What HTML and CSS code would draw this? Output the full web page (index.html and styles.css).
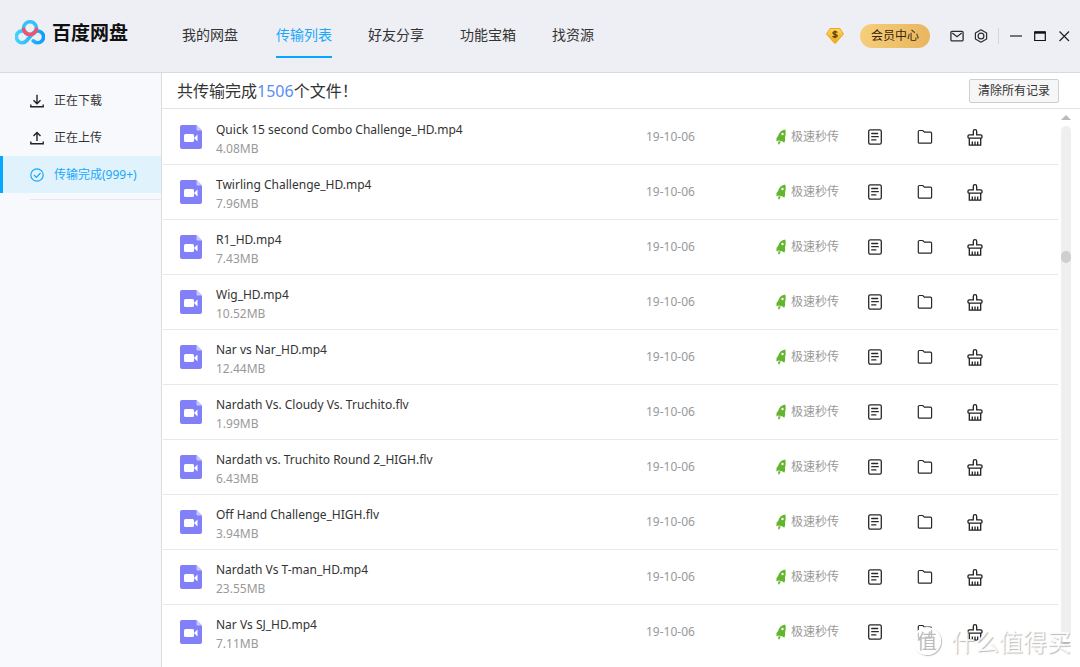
FILE: index.html
```html
<!DOCTYPE html>
<html lang="zh-CN">
<head>
<meta charset="utf-8">
<title>百度网盘</title>
<link rel="stylesheet" href="styles.css">
</head>
<body>
<svg class="sprite" aria-hidden="true">
  <defs>
    <linearGradient id="logo-blue" x1="0" x2="1" y1="0" y2="0"><stop offset="0" stop-color="#42d4fb"/><stop offset="1" stop-color="#0a9dfd"/></linearGradient>
    <linearGradient id="gem-gold" x1="0" x2="0" y1="0" y2="1"><stop offset="0" stop-color="#ffd660"/><stop offset="1" stop-color="#eca91a"/></linearGradient>
  </defs>
  <symbol id="video" viewBox="0 0 22 24">
    <path d="M2 0h14.500L22 5.500V22a2 2 0 0 1-2 2H2a2 2 0 0 1-2-2V2a2 2 0 0 1 2-2z" fill="#8180f8"/>
    <path d="M16.500 0L22 5.500h-4.500a1 1 0 0 1-1-1z" fill="#c9c8fc"/>
    <rect x="4" y="9" width="10" height="8" rx="1.500" fill="#fff"/>
    <path d="M14.500 12.500L17.500 9.500v7l-3-3z" fill="#fff"/>
  </symbol>
  <symbol id="rocket" viewBox="0 0 10 16">
    <path d="M9.300.5C5.500 1 3 3.500 2.200 6.800L.5 9v3.500l2-1 3.600.7 2.200 1.500.9-2.800-.2-2.400C9.800 6 9.900 3 9.300.5z" fill="#63b52e"/>
    <circle cx="6.500" cy="5" r="1.200" fill="#fff"/>
    <path d="M2.500 12.200l2.300.4-1.700 3.100-1-1z" fill="#63b52e"/>
  </symbol>
  <symbol id="doc" viewBox="0 0 16 16">
    <g fill="none" stroke="#292929" stroke-width="1.300" stroke-linecap="round"><rect x="1.700" y=".8" width="12.600" height="14.400" rx="1.600"/><path d="M4.700 4.500h6M4.700 7.700h6.600M4.700 10.900h4.200"/></g>
  </symbol>
  <symbol id="folder" viewBox="0 0 16 16">
    <path d="M1.300 13V2.700a1.200 1.200 0 0 1 1.200-1.200h3.300l1.600 1.700h6a1.200 1.200 0 0 1 1.200 1.200V13a1.100 1.100 0 0 1-1.100 1.100H2.400A1.100 1.100 0 0 1 1.300 13z" fill="none" stroke="#292929" stroke-width="1.200"/>
  </symbol>
  <symbol id="brush" viewBox="0 0 16 17">
    <path d="M6.300 5.800V2.400a1.700 1.700 0 0 1 3.400 0v3.400h4a1.300 1.300 0 0 1 1.300 1.300v1.200a.8.800 0 0 1-.8.800H1.800a.8.800 0 0 1-.8-.8V7.100a1.300 1.300 0 0 1 1.300-1.300zM2.300 9.100v7h11.400v-7M5.300 15.600v-3M8 15.600v-3M10.700 15.600v-3" fill="none" stroke="#202020" stroke-width="1.300"/>
  </symbol>
</svg>
<div class="app">
  <header class="topbar">
    <div class="brand">
      <svg class="brand-mark" viewBox="0 0 30 25" aria-hidden="true">
        <g fill="none" stroke-width="3.600" stroke-linecap="round">
          <circle cx="15" cy="8.300" r="6.500" stroke="#2fc2fc"/>
          <path d="M18.200 20.800a5.900 5.900 0 1 0-.4-7.300L11.800 20.500a5.900 5.900 0 1 1 .3-7" stroke="url(#logo-blue)"/>
          <path d="M8.600 9a6.500 6.500 0 0 0 12.800 0" stroke="#fa4f68"/>
        </g>
      </svg>
      <span class="brand-name">百度网盘</span>
    </div>
    <nav class="tabs">
      <a class="tab" href="#">我的网盘</a>
      <a class="tab active" href="#">传输列表</a>
      <a class="tab" href="#">好友分享</a>
      <a class="tab" href="#">功能宝箱</a>
      <a class="tab" href="#">找资源</a>
    </nav>
    <div class="tools">
      <svg class="gem" viewBox="0 0 18 16" aria-hidden="true"><path d="M4 .5h10L17.500 6 10 14.700q-1 1-2 0L.5 6z" fill="url(#gem-gold)" stroke="#eba91c"/><path d="M11.300 4.500C10.800 3.400 7 3 6.900 4.900c0 1.800 4.400 1 4.400 2.900C11.200 9.600 7.200 9.400 6.700 8M9 2.600v7.600" fill="none" stroke="#5b3a08" stroke-width="1.200"/></svg>
      <button class="vip">会员中心</button>
      <button class="icon-btn" aria-label="消息"><svg class="i14" viewBox="0 0 14 14"><g fill="none" stroke="#2b2b2f" stroke-width="1.300"><rect x=".9" y="2.300" width="12.200" height="9.600" rx="1.200"/><path d="M2.300 4l4.700 3.700L11.700 4"/></g></svg></button>
      <button class="icon-btn" aria-label="设置"><svg class="i14" viewBox="0 0 14 14"><g fill="none" stroke="#2b2b2f" stroke-width="1.200"><path d="M7 .8l5.600 3.100v6.200L7 13.200l-5.600-3.100V3.900z" stroke-linejoin="round"/><circle cx="7" cy="7" r="2.900"/></g></svg></button>
      <span class="divider"></span>
      <button class="icon-btn" aria-label="最小化"><svg class="i14" viewBox="0 0 14 14"><path d="M1 7h12" stroke="#222" stroke-width="1.200"/></svg></button>
      <button class="icon-btn" aria-label="最大化"><svg class="i14" viewBox="0 0 14 14"><path d="M1.700 3h10.600v8.500H1.700z" fill="none" stroke="#111" stroke-width="1.200"/><path d="M1.500 3.500h11" stroke="#111" stroke-width="2.400"/></svg></button>
      <button class="icon-btn" aria-label="关闭"><svg class="i14" viewBox="0 0 14 14"><path d="M2.500 2.500l9.500 9.500M12 2.500L2.500 12" stroke="#222" stroke-width="1.200"/></svg></button>
    </div>
  </header>
  <div class="body">
    <aside class="sidebar">
      <a class="side-item" href="#"><svg class="i14" viewBox="0 0 14 14"><path d="M7 .8v8.700M3.500 6.200L7 9.700l3.500-3.500M.8 10.500v2.300h12.400v-2.300" fill="none" stroke="#222" stroke-width="1.400"/></svg>正在下载</a>
      <a class="side-item" href="#"><svg class="i14" viewBox="0 0 14 14"><path d="M7 10V1.500M3.500 5L7 1.500 10.500 5M.8 10.500v2.300h12.400v-2.300" fill="none" stroke="#222" stroke-width="1.400"/></svg>正在上传</a>
      <a class="side-item current" href="#"><svg class="i14" viewBox="0 0 14 14"><g fill="none" stroke="#1aa8fb" stroke-width="1.200"><circle cx="7" cy="7" r="6.200"/><path d="M4 7l2.400 2.400L10.500 5"/></g></svg>传输完成(999+)</a>
      <div class="side-rule"></div>
    </aside>
    <main class="main">
      <div class="summary">
        <h1 class="summary-text">共传输完成<span class="count">1506</span>个文件！</h1>
        <button class="clear">清除所有记录</button>
      </div>
      <div class="list-area">
        <ul class="list">
          <li class="row"><svg class="file-icon"><use href="#video"/></svg><div class="file"><div class="name">Quick 15 second Combo Challenge_HD.mp4</div><div class="size">4.08MB</div></div><span class="date">19-10-06</span><span class="speed"><svg class="rocket"><use href="#rocket"/></svg>极速秒传</span><div class="actions"><button class="icon-btn" aria-label="打开文件"><svg class="i16"><use href="#doc"/></svg></button><button class="icon-btn" aria-label="打开文件夹"><svg class="i16"><use href="#folder"/></svg></button><button class="icon-btn" aria-label="清除记录"><svg class="i-brush"><use href="#brush"/></svg></button></div></li>
          <li class="row"><svg class="file-icon"><use href="#video"/></svg><div class="file"><div class="name">Twirling Challenge_HD.mp4</div><div class="size">7.96MB</div></div><span class="date">19-10-06</span><span class="speed"><svg class="rocket"><use href="#rocket"/></svg>极速秒传</span><div class="actions"><button class="icon-btn" aria-label="打开文件"><svg class="i16"><use href="#doc"/></svg></button><button class="icon-btn" aria-label="打开文件夹"><svg class="i16"><use href="#folder"/></svg></button><button class="icon-btn" aria-label="清除记录"><svg class="i-brush"><use href="#brush"/></svg></button></div></li>
          <li class="row"><svg class="file-icon"><use href="#video"/></svg><div class="file"><div class="name">R1_HD.mp4</div><div class="size">7.43MB</div></div><span class="date">19-10-06</span><span class="speed"><svg class="rocket"><use href="#rocket"/></svg>极速秒传</span><div class="actions"><button class="icon-btn" aria-label="打开文件"><svg class="i16"><use href="#doc"/></svg></button><button class="icon-btn" aria-label="打开文件夹"><svg class="i16"><use href="#folder"/></svg></button><button class="icon-btn" aria-label="清除记录"><svg class="i-brush"><use href="#brush"/></svg></button></div></li>
          <li class="row"><svg class="file-icon"><use href="#video"/></svg><div class="file"><div class="name">Wig_HD.mp4</div><div class="size">10.52MB</div></div><span class="date">19-10-06</span><span class="speed"><svg class="rocket"><use href="#rocket"/></svg>极速秒传</span><div class="actions"><button class="icon-btn" aria-label="打开文件"><svg class="i16"><use href="#doc"/></svg></button><button class="icon-btn" aria-label="打开文件夹"><svg class="i16"><use href="#folder"/></svg></button><button class="icon-btn" aria-label="清除记录"><svg class="i-brush"><use href="#brush"/></svg></button></div></li>
          <li class="row"><svg class="file-icon"><use href="#video"/></svg><div class="file"><div class="name">Nar vs Nar_HD.mp4</div><div class="size">12.44MB</div></div><span class="date">19-10-06</span><span class="speed"><svg class="rocket"><use href="#rocket"/></svg>极速秒传</span><div class="actions"><button class="icon-btn" aria-label="打开文件"><svg class="i16"><use href="#doc"/></svg></button><button class="icon-btn" aria-label="打开文件夹"><svg class="i16"><use href="#folder"/></svg></button><button class="icon-btn" aria-label="清除记录"><svg class="i-brush"><use href="#brush"/></svg></button></div></li>
          <li class="row"><svg class="file-icon"><use href="#video"/></svg><div class="file"><div class="name">Nardath Vs. Cloudy Vs. Truchito.flv</div><div class="size">1.99MB</div></div><span class="date">19-10-06</span><span class="speed"><svg class="rocket"><use href="#rocket"/></svg>极速秒传</span><div class="actions"><button class="icon-btn" aria-label="打开文件"><svg class="i16"><use href="#doc"/></svg></button><button class="icon-btn" aria-label="打开文件夹"><svg class="i16"><use href="#folder"/></svg></button><button class="icon-btn" aria-label="清除记录"><svg class="i-brush"><use href="#brush"/></svg></button></div></li>
          <li class="row"><svg class="file-icon"><use href="#video"/></svg><div class="file"><div class="name">Nardath vs. Truchito Round 2_HIGH.flv</div><div class="size">6.43MB</div></div><span class="date">19-10-06</span><span class="speed"><svg class="rocket"><use href="#rocket"/></svg>极速秒传</span><div class="actions"><button class="icon-btn" aria-label="打开文件"><svg class="i16"><use href="#doc"/></svg></button><button class="icon-btn" aria-label="打开文件夹"><svg class="i16"><use href="#folder"/></svg></button><button class="icon-btn" aria-label="清除记录"><svg class="i-brush"><use href="#brush"/></svg></button></div></li>
          <li class="row"><svg class="file-icon"><use href="#video"/></svg><div class="file"><div class="name">Off Hand Challenge_HIGH.flv</div><div class="size">3.94MB</div></div><span class="date">19-10-06</span><span class="speed"><svg class="rocket"><use href="#rocket"/></svg>极速秒传</span><div class="actions"><button class="icon-btn" aria-label="打开文件"><svg class="i16"><use href="#doc"/></svg></button><button class="icon-btn" aria-label="打开文件夹"><svg class="i16"><use href="#folder"/></svg></button><button class="icon-btn" aria-label="清除记录"><svg class="i-brush"><use href="#brush"/></svg></button></div></li>
          <li class="row"><svg class="file-icon"><use href="#video"/></svg><div class="file"><div class="name">Nardath Vs T-man_HD.mp4</div><div class="size">23.55MB</div></div><span class="date">19-10-06</span><span class="speed"><svg class="rocket"><use href="#rocket"/></svg>极速秒传</span><div class="actions"><button class="icon-btn" aria-label="打开文件"><svg class="i16"><use href="#doc"/></svg></button><button class="icon-btn" aria-label="打开文件夹"><svg class="i16"><use href="#folder"/></svg></button><button class="icon-btn" aria-label="清除记录"><svg class="i-brush"><use href="#brush"/></svg></button></div></li>
          <li class="row"><svg class="file-icon"><use href="#video"/></svg><div class="file"><div class="name">Nar Vs SJ_HD.mp4</div><div class="size">7.11MB</div></div><span class="date">19-10-06</span><span class="speed"><svg class="rocket"><use href="#rocket"/></svg>极速秒传</span><div class="actions"><button class="icon-btn" aria-label="打开文件"><svg class="i16"><use href="#doc"/></svg></button><button class="icon-btn" aria-label="打开文件夹"><svg class="i16"><use href="#folder"/></svg></button><button class="icon-btn" aria-label="清除记录"><svg class="i-brush"><use href="#brush"/></svg></button></div></li>
        </ul>
        <div class="scroll" aria-hidden="true">
          <span class="arrow up"></span>
          <span class="track"><span class="thumb"></span></span>
          <span class="arrow down"></span>
        </div>
      </div>
    </main>
  </div>
  <div class="watermark"><span class="seal">值</span><span>什么值得买</span></div>
</div>
</body>
</html>
```
FILE: styles.css
```css
* { box-sizing: border-box; }

body {
  margin: 0;
  color: #333;
  font: 12px/18px "Noto Sans", "Noto Sans CJK SC", sans-serif;
}

a { color: inherit; text-decoration: none; }

button {
  padding: 0;
  border: 0;
  background: none;
  color: inherit;
  font: inherit;
}

svg { display: block; flex: none; }

.sprite { position: absolute; width: 0; height: 0; }

.app {
  position: relative;
  display: flex;
  flex-direction: column;
  height: 100vh;
  overflow: hidden;
  background: #fff;
}

.topbar {
  display: flex;
  flex: none;
  height: 73px;
  padding: 0 9px 0 15px;
  border-bottom: 1px solid #d9dade;
  background: #eeeff5;
}

.brand {
  display: flex;
  align-items: center;
  gap: 7px;
  width: 167px;
  padding-bottom: 8px;
}

.brand-mark { width: 30px; height: 25px; }

.brand-name {
  color: #111;
  font: bold 19px/26px "Noto Sans CJK SC", sans-serif;
}

.tabs { display: flex; flex: 1; gap: 36px; }

.tab {
  height: 58px;
  padding-top: 23px;
  border-bottom: 2px solid transparent;
  font: 14px/22px "Noto Sans CJK SC", sans-serif;
  white-space: nowrap;
}

.tab.active { margin-left: 2px; border-color: #06a7ff; color: #1aa8fb; }

.tools {
  display: flex;
  align-items: center;
  gap: 10px;
  height: 71px;
}

.gem { width: 18px; height: 16px; margin-right: 6px; }

.vip {
  width: 70px;
  height: 24px;
  margin-right: 10px;
  border-radius: 12px;
  background: linear-gradient(100deg, #f6cf7c, #e8b55e);
  color: #3a2508;
}

.i14 { width: 14px; height: 14px; }
.i16 { width: 16px; height: 16px; }
.i-brush { width: 16px; height: 17px; }

.divider { width: 1px; height: 16px; background: #d5d6da; }

.body { display: flex; flex: 1; min-height: 0; }

.sidebar {
  flex: none;
  width: 162px;
  padding-top: 9px;
  border-right: 1px solid #d9dce0;
  background: #f8f9fc;
}

.side-item {
  display: flex;
  align-items: center;
  gap: 10px;
  height: 37px;
  padding-left: 27px;
  border-left: 3px solid transparent;
}

.side-item.current {
  border-color: #06a7ff;
  background: #e0f2fc;
  color: #1aa8fb;
}

.side-rule { height: 1px; margin: 6px 0 0 30px; background: #e6e8eb; }

.main { display: flex; flex: 1; flex-direction: column; min-width: 0; }

.summary {
  display: flex;
  flex: none;
  align-items: center;
  justify-content: space-between;
  height: 36px;
  padding: 1px 21px 0 15px;
  border-bottom: 1px solid #e4e4e4;
}

.summary-text { margin: 0; font-size: 16px; font-weight: 400; line-height: 24px; }

.count { color: #5a8df5; }

.clear {
  height: 24px;
  padding: 0 8px;
  border: 1px solid #cfcfcf;
  border-radius: 2px;
  background: #f6f6f6;
}

.list-area { display: flex; flex: 1; min-height: 0; }

.list { flex: 1; min-width: 0; margin: 0; padding: 1px 0 0 1px; overflow: hidden; list-style: none; }

.row {
  display: grid;
  grid-template-columns: 22px 1fr 130px 91px 191px;
  align-items: center;
  height: 55px;
  padding-left: 17px;
  border-bottom: 1px solid #e9e9e9;
}

.row:last-child { border-color: transparent; }

.file-icon { width: 22px; height: 24px; }

.file { min-width: 0; padding: 6px 0 0 14px; }

.name { white-space: nowrap; }

.size { color: #999; line-height: 20px; }

.date, .speed { color: #999; }

.speed { display: flex; align-items: center; gap: 5px; }

.rocket { width: 10px; height: 16px; }

.actions { display: flex; gap: 34px; }

.scroll {
  display: flex;
  flex: none;
  flex-direction: column;
  align-items: center;
  gap: 6px;
  width: 22px;
  padding: 6px 6px 20px 0;
}

.arrow { border: 5px solid transparent; }
.arrow.up { border-top: 0; border-bottom-color: #b7babf; }
.arrow.down { border-bottom: 0; border-top-color: #b7babf; }

.track {
  flex: 1;
  width: 10px;
  padding-top: 125px;
  border-radius: 5px;
  background: #efeff0;
}

.thumb { display: block; height: 12px; border-radius: 5px; background: #cdcfd1; }

/* translucent site mark over the lower right corner */
.watermark {
  position: absolute;
  right: 9px;
  bottom: 12px;
  display: flex;
  align-items: center;
  gap: 10px;
  color: rgba(255, 255, 255, 0.9);
  font: 24px/28px "Noto Sans CJK SC", sans-serif;
  text-shadow: 1px 1px 1px #bbb;
}

.seal {
  width: 28px;
  height: 28px;
  border: 2px solid #fff;
  border-radius: 50%;
  background: rgba(255, 255, 255, 0.7);
  box-shadow: 1px 1px 1px #bbb;
  color: #bbb;
  font-size: 20px;
  line-height: 24px;
  text-align: center;
  text-shadow: none;
}
```
